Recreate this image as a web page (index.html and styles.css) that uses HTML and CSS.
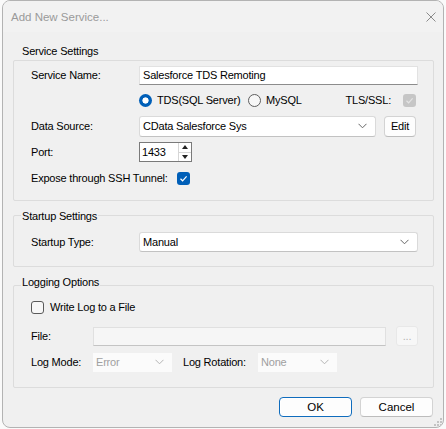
FILE: index.html
```html
<!DOCTYPE html>
<html lang="en-US">
  <head>
    <meta charset="UTF-8" />
    <title>Add New Service...</title>
    <link rel="stylesheet" href="styles.css">
  </head>
  <body>
    <div class="window">
      <div class="titlebar">
        <span class="title">Add New Service...</span>
        <svg class="close" width="10" height="10" viewBox="0 0 10 10">
          <path d="M0.5 0.5 L9.5 9.5 M9.5 0.5 L0.5 9.5" stroke="#8a8a8a" stroke-width="1" />
        </svg>
      </div>

      <div class="client">
        <!-- Service settings -->
        <div class="group">
          <div class="group-title first"><span>Service Settings</span></div>
          <div class="group-body service-body">
            <div class="row row-first">
              <span class="label">Service Name:</span>
              <div class="textbox name-box">Salesforce TDS Remoting</div>
            </div>
            <div class="row">
              <span class="label"></span>
              <div class="option option-tds">
                <span class="radio checked"></span>
                <span>TDS(SQL Server)</span>
              </div>
              <div class="option">
                <span class="radio"></span>
                <span>MySQL</span>
              </div>
              <span class="tls">TLS/SSL:</span>
              <span class="check check-disabled">
                <svg width="13" height="13" viewBox="0 0 13 13"><path d="M3.5 6.8 L5.6 8.8 L9.6 4.4" fill="none" stroke="#e4e4e4" stroke-width="1.2" /></svg>
              </span>
            </div>
            <div class="row">
              <span class="label">Data Source:</span>
              <div class="combo source-combo">
                <span>CData Salesforce Sys</span>
                <svg class="chevron" width="9" height="6" viewBox="0 0 9 6"><path d="M0.5 0.8 L4.5 4.8 L8.5 0.8" fill="none" stroke="#666" stroke-width="1" /></svg>
              </div>
              <div class="btn edit-btn">Edit</div>
            </div>
            <div class="row">
              <span class="label">Port:</span>
              <div class="spin">
                <span class="spin-value">1433</span>
                <div class="spin-btns">
                  <span class="spin-up"></span>
                  <span class="spin-down"></span>
                </div>
              </div>
            </div>
            <div class="row">
              <span>Expose through SSH Tunnel:</span>
              <span class="check check-on ssh-check">
                <svg width="13" height="13" viewBox="0 0 13 13"><path d="M3.5 6.8 L5.6 8.8 L9.6 4.4" fill="none" stroke="#fff" stroke-width="1.2" /></svg>
              </span>
            </div>
          </div>
        </div>

        <!-- Startup settings -->
        <div class="group group-next">
          <div class="group-title startup"><span>Startup Settings</span></div>
          <div class="group-body startup-body">
            <div class="row row-combo">
              <span class="label">Startup Type:</span>
              <div class="combo startup-combo">
                <span>Manual</span>
                <svg class="chevron" width="9" height="6" viewBox="0 0 9 6"><path d="M0.5 0.8 L4.5 4.8 L8.5 0.8" fill="none" stroke="#666" stroke-width="1" /></svg>
              </div>
            </div>
          </div>
        </div>

        <!-- Logging options -->
        <div class="group group-next">
          <div class="group-title logging"><span>Logging Options</span></div>
          <div class="group-body logging-body">
            <div class="row row-log">
              <span class="check check-off"></span>
              <span class="check-text">Write Log to a File</span>
            </div>
            <div class="row row-log">
              <span class="label label-short">File:</span>
              <div class="textbox file-box"></div>
              <div class="btn browse-btn">...</div>
            </div>
            <div class="row row-log">
              <span class="label label-short">Log Mode:</span>
              <div class="combo combo-disabled">
                <span>Error</span>
                <svg class="chevron" width="9" height="6" viewBox="0 0 9 6"><path d="M0.5 0.8 L4.5 4.8 L8.5 0.8" fill="none" stroke="#b4b4b4" stroke-width="1" /></svg>
              </div>
              <span class="rotation-label">Log Rotation:</span>
              <div class="combo combo-disabled">
                <span>None</span>
                <svg class="chevron" width="9" height="6" viewBox="0 0 9 6"><path d="M0.5 0.8 L4.5 4.8 L8.5 0.8" fill="none" stroke="#b4b4b4" stroke-width="1" /></svg>
              </div>
            </div>
          </div>
        </div>

        <div class="buttons">
          <div class="btn dialog-btn default-btn">OK</div>
          <div class="btn dialog-btn">Cancel</div>
        </div>
      </div>

      <svg class="grip" width="9" height="9" viewBox="0 0 9 9">
        <rect x="7" y="1" width="2" height="2" fill="#c4c4c4" />
        <rect x="4" y="4" width="2" height="2" fill="#c4c4c4" />
        <rect x="7" y="4" width="2" height="2" fill="#c4c4c4" />
        <rect x="1" y="7" width="2" height="2" fill="#c4c4c4" />
        <rect x="4" y="7" width="2" height="2" fill="#c4c4c4" />
        <rect x="7" y="7" width="2" height="2" fill="#c4c4c4" />
      </svg>
    </div>
  </body>
</html>
```

FILE: styles.css
```css
body {
  margin: 0;
  background-color: #fafafa;
  font-family: "Liberation Sans", Arial, sans-serif;
  font-size: 11px;
  letter-spacing: -0.2px;
  color: #000;
}

.window {
  position: relative;
  width: 440px;
  height: 426px;
  margin-left: 2px;
  border: 1px solid #b3b3b3;
  border-radius: 8px;
  background-color: #f0f0f0;
  overflow: hidden;
}

.titlebar {
  height: 31px;
  display: flex;
  align-items: center;
  justify-content: space-between;
  padding: 0 7px 0 8px;
  background-color: #f2f2f2;
}

.title {
  font-size: 11.5px;
  letter-spacing: 0;
  color: #9a9a9a;
}

.client {
  padding: 12px 9px 0 10px;
}

/* group boxes */
.group-title {
  height: 14px;
  line-height: 14px;
  padding-left: 8px;
}

.group-title span {
  background-color: #f0f0f0;
  padding: 0 1px;
}

.group-title.first {
  margin-bottom: 2px;
}

.group-title.startup {
  margin-bottom: -8px;
}

.group-title.logging {
  margin-bottom: -4px;
}

.group-next {
  margin-top: 8px;
}

.group-body {
  border: 1px solid #dcdcdc;
  border-radius: 2px;
  display: flex;
  flex-direction: column;
}

.service-body {
  padding: 2px 15px 9px 17px;
}

.startup-body {
  padding: 16px 15px 14px 17px;
}

.logging-body {
  padding: 11px 15px 15px 17px;
  gap: 9px;
}

.logging-body .row-log:last-child {
  margin-top: -3px;
}

.row {
  display: flex;
  align-items: center;
  height: 26px;
}

.row-first {
  height: 24px;
}

.row-combo {
  height: 20px;
}

.row-log {
  height: 20px;
}

.label {
  width: 108px;
  flex-shrink: 0;
}

.label-short {
  width: 62px;
}

/* inputs */
.textbox {
  height: 17px;
  line-height: 17px;
  background-color: #fff;
  border: 1px solid #e2e2e2;
  border-bottom-color: #8c8c8c;
  padding-left: 3px;
}

.name-box {
  width: 274px;
}

.file-box {
  width: 288px;
  background-color: #f6f6f6;
  border-color: #e0e0e0;
  border-bottom-color: #c4c4c4;
}

.combo {
  display: flex;
  align-items: center;
  justify-content: space-between;
  background-color: #fff;
  border: 1px solid #dadada;
  border-bottom-color: #c2c2c2;
  border-radius: 3px;
  padding: 0 8px 0 3px;
}

.source-combo {
  width: 224px;
  height: 19px;
}

.startup-combo {
  width: 266px;
  height: 18px;
}

.combo-disabled {
  width: 68px;
  height: 19px;
  border: none;
  border-radius: 0;
  background-color: #fbfbfb;
  color: #a0a0a0;
}

.rotation-label {
  margin-left: 11px;
  width: 75px;
}

.btn {
  display: flex;
  align-items: center;
  justify-content: center;
  background-color: #fdfdfd;
  border: 1px solid #d3d3d3;
  border-bottom-color: #bcbcbc;
  border-radius: 4px;
}

.edit-btn {
  width: 30px;
  height: 19px;
  margin-left: 8px;
}

.browse-btn {
  width: 20px;
  height: 18px;
  margin-left: 10px;
  background-color: #f7f7f7;
  border-color: #e8e8e8;
  color: #b4b4b4;
  border-radius: 3px;
}

/* spin box */
.spin {
  display: flex;
  width: 51px;
  height: 18px;
  background-color: #fff;
  border: 1px solid #7a7a7a;
}

.spin-value {
  flex: 1;
  line-height: 18px;
  padding-left: 2px;
}

.spin-btns {
  display: flex;
  flex-direction: column;
  width: 12px;
  border-left: 1px solid #d6d6d6;
}

.spin-up,
.spin-down {
  flex: 1;
  display: flex;
  align-items: center;
  justify-content: center;
}

.spin-up {
  border-bottom: 1px solid #d6d6d6;
}

.spin-up::after {
  content: "";
  border-left: 3px solid transparent;
  border-right: 3px solid transparent;
  border-bottom: 4px solid #222;
}

.spin-down::after {
  content: "";
  border-left: 3px solid transparent;
  border-right: 3px solid transparent;
  border-top: 4px solid #222;
}

/* radios & checks */
.option {
  display: flex;
  align-items: center;
  gap: 5px;
}

.option-tds {
  width: 109px;
}

.radio {
  width: 11px;
  height: 11px;
  border: 1px solid #5e5e5e;
  border-radius: 50%;
  background-color: #f7f7f7;
}

.radio.checked {
  width: 13px;
  height: 13px;
  border: none;
  background: radial-gradient(circle, #fff 0 2.8px, #005fb8 3.4px);
}

.tls {
  margin-left: auto;
}

.check {
  display: flex;
  width: 13px;
  height: 13px;
  border-radius: 3px;
  box-sizing: border-box;
}

.check-disabled {
  background-color: #c6c6c6;
  margin-left: 12px;
  margin-right: 2px;
}

.check-on {
  background-color: #005fb8;
}

.ssh-check {
  margin-left: 9px;
}

.check-off {
  border: 1px solid #5a5a5a;
  background-color: #f7f7f7;
}

.check-text {
  margin-left: 6px;
}

/* dialog buttons */
.buttons {
  display: flex;
  justify-content: flex-end;
  gap: 8px;
  margin-top: 9px;
  padding-right: 1px;
}

.dialog-btn {
  width: 71px;
  height: 18px;
  font-size: 11.5px;
  letter-spacing: 0;
}

.default-btn {
  border-color: #0f6cbd;
  box-shadow: inset 0 0 0 1px #fff;
}

.grip {
  position: absolute;
  right: 1px;
  bottom: 1px;
}
```
